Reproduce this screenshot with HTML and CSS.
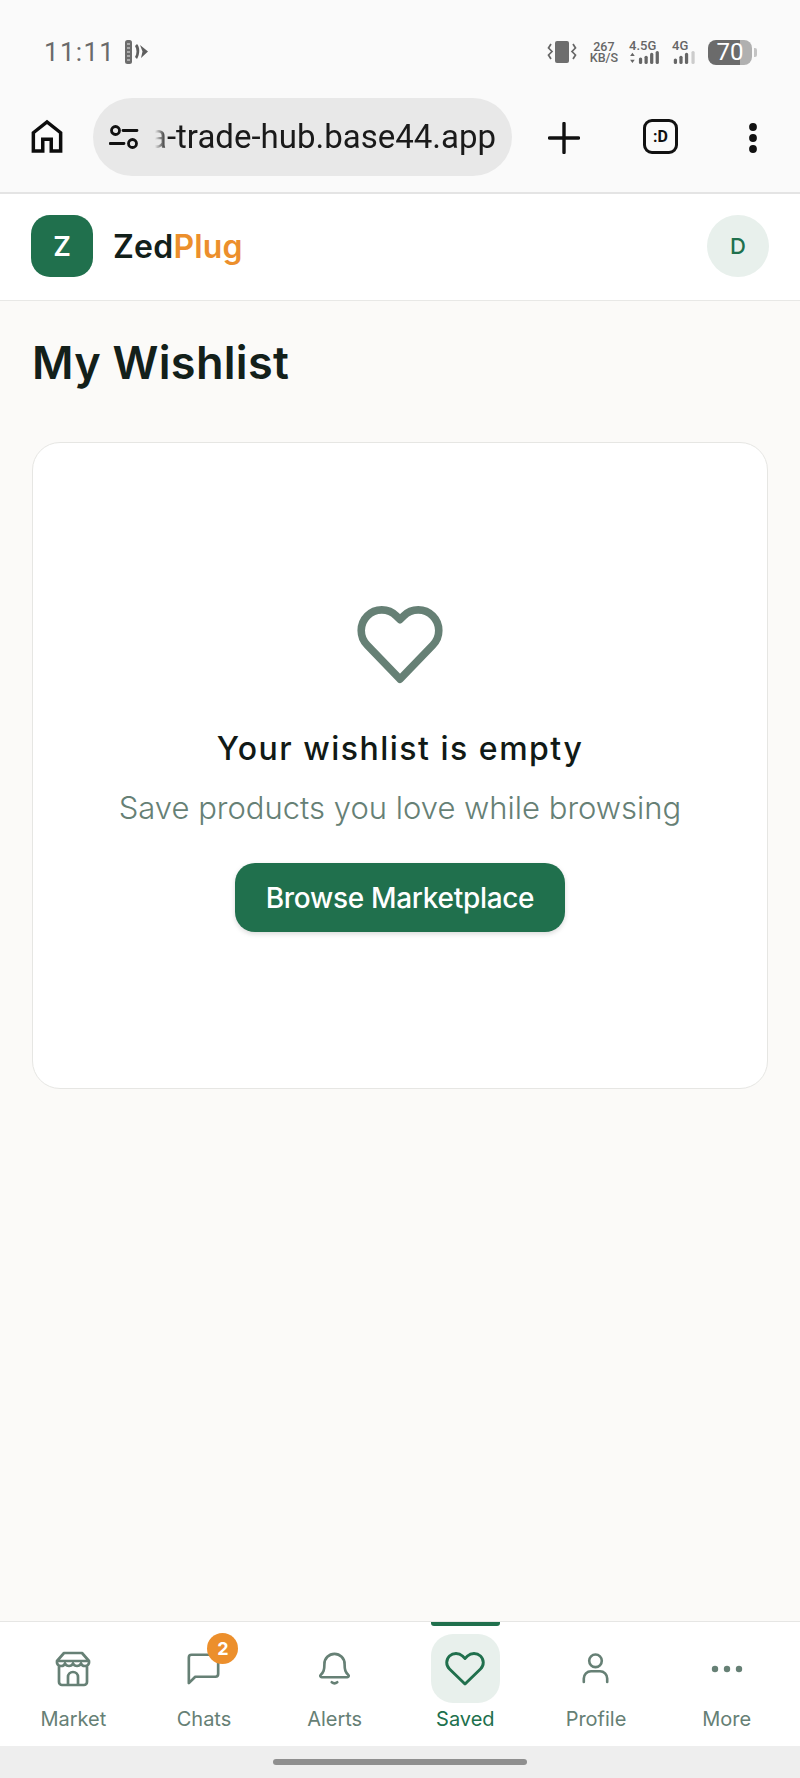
FILE: index.html
```html
<!DOCTYPE html>
<html lang="en">
<head>
<meta charset="utf-8">
<title>ZedPlug - My Wishlist</title>
<link rel="stylesheet" href="styles.css">
</head>
<body>
<div class="screen">
  <div class="status-bar">
    <div class="status-left">
      <span class="clock">11:11</span>
      <svg class="notif" viewBox="0 0 24 26" width="24" height="26"><rect x="1" y="1" width="7" height="24" rx="2.500" fill="#6c6c6c"/><path d="M3 5h3M3 9h3M3 13h3M3 17h3M3 21h3" stroke="#e8e8e8" stroke-width="1"/><path d="M13 5c3 3 3 10 0 15l-2-2c2-3 2-8 0-11zM16 6l8 6.500-7 6.500 1.500-6.500z" fill="#5e5e5e"/></svg>
    </div>
    <div class="status-right">
      <svg class="vibrate" viewBox="0 0 30 24" width="30" height="24"><rect x="8" y="1" width="14" height="22" rx="2" fill="#6e6e6e"/><path d="M4 4L1.500 8 5 11.500 1.500 15 4 19M26 4l2.500 4L25 11.500 28.500 15 26 19" fill="none" stroke="#666" stroke-width="1.700"/></svg>
      <div class="speed"><span>267</span><span>KB/S</span></div>
      <div class="signal signal-first">
        <span class="net">4.5G</span>
        <svg viewBox="0 0 32 14" width="31" height="13"><path d="M3 2l2.500 3.500h-5zM3 13l2.500-3.500h-5z" fill="#666"/><rect x="10" y="7" width="3.500" height="7" rx="1.700" fill="#666"/><rect x="16" y="5" width="3.500" height="9" rx="1.700" fill="#666"/><rect x="22" y="2" width="3.500" height="12" rx="1.700" fill="#666"/><rect x="28" y="0" width="3.500" height="14" rx="1.700" fill="#666"/></svg>
      </div>
      <div class="signal">
        <span class="net">4G</span>
        <svg viewBox="0 0 24 14" width="24" height="13"><rect x="1" y="8" width="3.500" height="6" rx="1.700" fill="#666"/><rect x="7" y="5" width="3.500" height="9" rx="1.700" fill="#666"/><rect x="13" y="2" width="3.500" height="12" rx="1.700" fill="#666"/><rect x="20" y="0" width="3.500" height="14" rx="1.700" fill="#ccc"/></svg>
      </div>
      <div class="battery"><span class="battery-level">70</span></div>
      <span class="battery-tip"></span>
    </div>
  </div>

  <div class="toolbar">
    <svg class="tool-home" viewBox="0 0 34 36" width="32" height="35"><path d="M2.500 33.500V14L17 2.500 31.500 14v19.500h-10V21h-9v12.500z" fill="none" stroke="#0c0c0c" stroke-width="3.700"/></svg>
    <div class="omnibox">
      <svg viewBox="0 0 30 24" width="30" height="24"><circle cx="6.500" cy="5.500" r="4" fill="none" stroke="#111" stroke-width="2.800"/><path d="M14 5.500h14M1 18.500h14" stroke="#111" stroke-width="2.800" stroke-linecap="round"/><circle cx="23.500" cy="18.500" r="4" fill="none" stroke="#111" stroke-width="2.800"/></svg>
      <div class="url"><span>a-trade-hub.base44.app</span></div>
    </div>
    <svg class="tool-plus" viewBox="0 0 32 32" width="32" height="32"><path d="M16 1.500v29M1.500 16h29" stroke="#111" stroke-width="3.400" stroke-linecap="round"/></svg>
    <div class="tab-count">:D</div>
    <svg class="tool-menu" viewBox="0 0 10 32" width="10" height="32"><circle cx="5" cy="5" r="3.900" fill="#111"/><circle cx="5" cy="16" r="3.900" fill="#111"/><circle cx="5" cy="27" r="3.900" fill="#111"/></svg>
  </div>

  <header class="app-header">
    <div class="brand">
      <div class="brand-mark">Z</div>
      <div class="brand-name">Zed<span class="brand-accent">Plug</span></div>
    </div>
    <div class="avatar">D</div>
  </header>

  <main class="content">
    <h1 class="page-title">My Wishlist</h1>
    <section class="empty-card">
      <svg class="empty-heart" viewBox="0 0 24 24" width="96" height="96"><path d="M12 20.800L3.800 12.300a5.200 5.200 0 0 1 0-7.300 5.100 5.100 0 0 1 7.300 0l.9.9.9-.9a5.100 5.100 0 0 1 7.300 0 5.200 5.200 0 0 1 0 7.300z" fill="none" stroke="#668075" stroke-width="1.900" stroke-linejoin="round"/></svg>
      <h2 class="empty-title">Your wishlist is empty</h2>
      <p class="empty-text">Save products you love while browsing</p>
      <button class="browse-btn" type="button">Browse Marketplace</button>
    </section>
  </main>

  <nav class="bottom-nav">
    <a class="nav-item">
      <span class="nav-icon">
        <svg viewBox="0 0 38 38" width="38" height="38"><path d="M5 17v15a3 3 0 0 0 3 3h22a3 3 0 0 0 3-3V17M10 3h18l7 8v2a4 4 0 0 1-4 3 4 4 0 0 1-4-2.500A4.500 4.500 0 0 1 23 16a4.500 4.500 0 0 1-4-2.500A4.500 4.500 0 0 1 15 16a4.500 4.500 0 0 1-4-2.500A4 4 0 0 1 7 16a4 4 0 0 1-4-3v-2zM3 11h32M14 35v-8a5 5 0 0 1 10 0v8" fill="none" stroke="#668075" stroke-width="2.700" stroke-linecap="round" stroke-linejoin="round"/></svg>
      </span>
      <span class="nav-label">Market</span>
    </a>
    <a class="nav-item">
      <span class="nav-icon">
        <svg viewBox="0 0 36 36" width="33" height="33"><path d="M2 34V6a3 3 0 0 1 3-3h26a3 3 0 0 1 3 3v18a3 3 0 0 1-3 3H9z" fill="none" stroke="#668075" stroke-width="2.900" stroke-linejoin="round"/></svg>
        <span class="badge">2</span>
      </span>
      <span class="nav-label">Chats</span>
    </a>
    <a class="nav-item">
      <span class="nav-icon">
        <svg viewBox="0 0 36 38" width="33" height="35"><path d="M3 26c3-3 4-5 4-12a11 11 0 0 1 22 0c0 7 1 9 4 12 1 1 .5 2.500-1 2.500H4c-1.500 0-2-1.500-1-2.500zM15 34c2 1.500 4 1.500 6 0" fill="none" stroke="#668075" stroke-width="2.900" stroke-linecap="round" stroke-linejoin="round"/></svg>
      </span>
      <span class="nav-label">Alerts</span>
    </a>
    <a class="nav-item is-active">
      <span class="nav-icon">
        <svg viewBox="0 0 40 36" width="40" height="36"><path d="M20 33L4.500 18a9 9 0 0 1 0-13 9.500 9.500 0 0 1 13 0L20 7.500 22.500 5a9.500 9.500 0 0 1 13 0 9 9 0 0 1 0 13z" fill="none" stroke="#20704d" stroke-width="2.900" stroke-linejoin="round"/></svg>
      </span>
      <span class="nav-label">Saved</span>
    </a>
    <a class="nav-item">
      <span class="nav-icon">
        <svg viewBox="0 0 30 36" width="27" height="33"><circle cx="15" cy="9.500" r="7" fill="none" stroke="#668075" stroke-width="2.900"/><path d="M2 33v-4a8 8 0 0 1 8-8h10a8 8 0 0 1 8 8v4" fill="none" stroke="#668075" stroke-width="2.900" stroke-linecap="round"/></svg>
      </span>
      <span class="nav-label">Profile</span>
    </a>
    <a class="nav-item">
      <span class="nav-icon">
        <svg viewBox="0 0 32 8" width="32" height="8"><circle cx="4" cy="4" r="3.200" fill="#668075"/><circle cx="16" cy="4" r="3.200" fill="#668075"/><circle cx="28" cy="4" r="3.200" fill="#668075"/></svg>
      </span>
      <span class="nav-label">More</span>
    </a>
  </nav>

  <div class="gesture-bar"><span class="gesture-pill"></span></div>
</div>
</body>
</html>
```
FILE: styles.css
```css
* { box-sizing: border-box; }

html, body { margin: 0; padding: 0; }

body {
  font-family: "Inter", "Liberation Sans", sans-serif;
  background: #fbfaf8;
}

.screen {
  width: 800px;
  height: 1778px;
  display: flex;
  flex-direction: column;
  overflow: hidden;
}

/* Phone status bar */
.status-bar {
  height: 85px;
  flex: none;
  background: #fafafa;
  display: flex;
  align-items: flex-start;
  justify-content: space-between;
  padding: 39px 43px 0 44px;
  color: #666;
}

.status-left, .status-right { display: flex; align-items: center; }

.clock {
  font-family: "Roboto", sans-serif;
  font-size: 26px;
  line-height: 26px;
  letter-spacing: 1.300px;
  color: #6a6a6a;
}

.notif { margin-left: 9px; }

.status-right { height: 26px; }

.speed {
  display: flex;
  flex-direction: column;
  align-items: center;
  margin-left: 13px;
  font-family: "Roboto", sans-serif;
  font-size: 12.500px;
  line-height: 11.500px;
  font-weight: 500;
  color: #666;
}

.signal {
  display: flex;
  flex-direction: column;
  align-items: flex-start;
  margin-left: 12px;
}

.signal-first { margin-left: 11px; }

.net {
  font-family: "Roboto", sans-serif;
  font-size: 13px;
  line-height: 11px;
  font-weight: 500;
  color: #666;
}

.battery {
  width: 44px;
  height: 25px;
  margin-left: 12px;
  border-radius: 8px;
  background: linear-gradient(90deg, #6b6b6b 0 72%, #b0b0b0 72% 100%);
  display: flex;
  align-items: center;
  justify-content: center;
}

.battery-level {
  font-family: "Roboto", sans-serif;
  font-size: 24px;
  line-height: 25px;
  color: #fff;
}

.battery-tip {
  width: 3px;
  height: 9px;
  margin-left: 2px;
  border-radius: 0 2px 2px 0;
  background: #c4c4c4;
}

/* Browser toolbar */
.toolbar {
  height: 109px;
  flex: none;
  background: #fafafa;
  border-bottom: 2px solid #e4e4e4;
  display: flex;
  align-items: flex-start;
  padding: 13px 0 0 31px;
}

.tool-home { margin-top: 21px; }

.omnibox {
  width: 419px;
  height: 78px;
  margin-left: 30px;
  padding-left: 16px;
  border-radius: 39px;
  background: #e8e8e8;
  display: flex;
  align-items: center;
}

.url {
  width: 341px;
  margin-left: 16px;
  overflow: hidden;
  white-space: nowrap;
  direction: rtl;
  font-family: "Roboto", sans-serif;
  font-size: 33px;
  line-height: 42px;
  color: #1a1a1a;
  -webkit-mask-image: linear-gradient(90deg, transparent 0, #000 12px);
  mask-image: linear-gradient(90deg, transparent 0, #000 12px);
}

.url span { direction: ltr; unicode-bidi: bidi-override; }

.tool-plus { margin: 24px 0 0 36px; }

.tab-count {
  width: 35px;
  height: 35px;
  margin: 21px 0 0 63px;
  border: 3px solid #111;
  border-radius: 9px;
  display: flex;
  align-items: center;
  justify-content: center;
  font-family: "Roboto", sans-serif;
  font-size: 16px;
  font-weight: 700;
  color: #111;
}

.tool-menu { margin: 24px 0 0 70px; }

/* App header */
.app-header {
  height: 107px;
  flex: none;
  background: #fff;
  border-bottom: 1px solid #e8e8e6;
  display: flex;
  align-items: center;
  justify-content: space-between;
  padding: 0 31px 2px 31px;
}

.brand { display: flex; align-items: center; gap: 20px; }

.brand-mark {
  width: 62px;
  height: 62px;
  border-radius: 19px;
  background: #20704d;
  color: #fff;
  display: flex;
  align-items: center;
  justify-content: center;
  font-size: 27px;
  font-weight: 600;
}

.brand-name {
  font-size: 32px;
  font-weight: 600;
  letter-spacing: 0.200px;
  color: #12201a;
}

.brand-accent { color: #ec8f2c; }

.avatar {
  width: 62px;
  height: 62px;
  border-radius: 50%;
  background: #e8f0ec;
  color: #20704d;
  display: flex;
  align-items: center;
  justify-content: center;
  font-size: 22px;
  font-weight: 500;
}

/* Wishlist page */
.content {
  flex: 1;
  min-height: 0;
  padding: 32px 32px 0;
  background: #fbfaf8;
}

.page-title {
  margin: 0 0 49px;
  font-size: 45px;
  line-height: 60px;
  font-weight: 600;
  letter-spacing: 0.300px;
  color: #13201a;
}

.empty-card {
  height: 647px;
  background: #fff;
  border: 1px solid #e6e6e3;
  border-radius: 28px;
  display: flex;
  flex-direction: column;
  align-items: center;
  padding-top: 153px;
}

.empty-heart { display: block; }

.empty-title {
  margin: 35px 0 0;
  font-size: 32px;
  line-height: 44px;
  font-weight: 500;
  letter-spacing: 1.500px;
  color: #111a16;
}

.empty-text {
  margin: 15px 0 0;
  font-size: 31px;
  line-height: 44px;
  font-weight: 300;
  color: #668075;
}

.browse-btn {
  width: 330px;
  height: 69px;
  margin-top: 33px;
  border: 0;
  border-radius: 20px;
  background: #20704d;
  color: #fff;
  font-family: inherit;
  font-size: 28px;
  font-weight: 500;
  letter-spacing: -0.300px;
  box-shadow: 0 2px 5px rgba(0, 0, 0, 0.15);
}

/* Bottom navigation */
.bottom-nav {
  height: 125px;
  flex: none;
  background: #fff;
  border-top: 1px solid #e6e6e4;
  display: grid;
  grid-template-columns: repeat(6, 1fr);
  padding: 0 8px;
}

.nav-item {
  position: relative;
  display: flex;
  flex-direction: column;
  align-items: center;
  padding-top: 12px;
  color: #668075;
}

.nav-icon {
  position: relative;
  width: 69px;
  height: 69px;
  border-radius: 22px;
  display: flex;
  align-items: center;
  justify-content: center;
}

.nav-label {
  margin-top: 2px;
  font-size: 20px;
  line-height: 28px;
}

.is-active { color: #20704d; }

.is-active .nav-icon { background: #e8f0ec; }

/* Indicator bar above the selected tab */
.is-active::before {
  content: "";
  position: absolute;
  top: 0;
  left: 50%;
  width: 69px;
  height: 4px;
  margin-left: -34px;
  border-radius: 0 0 3px 3px;
  background: #20704d;
}

.badge {
  position: absolute;
  top: -1px;
  right: 0;
  width: 31px;
  height: 31px;
  border-radius: 50%;
  background: #ec8f2c;
  color: #fff;
  display: flex;
  align-items: center;
  justify-content: center;
  font-size: 18px;
  font-weight: 700;
}

/* Gesture area */
.gesture-bar {
  height: 32px;
  flex: none;
  background: #eeeeee;
  display: flex;
  justify-content: center;
  padding-top: 13px;
}

.gesture-pill {
  width: 254px;
  height: 6px;
  border-radius: 3px;
  background: #8f8f8f;
}
```
